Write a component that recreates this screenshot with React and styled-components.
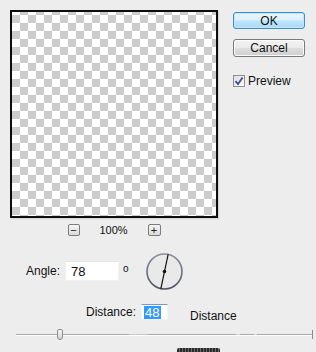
import styled, { createGlobalStyle } from "styled-components";

const Global = createGlobalStyle`
  html, body {
    margin: 0;
    padding: 0;
    background: #ededed;
  }
  body {
    font-family: "Liberation Sans", Arial, sans-serif;
    font-size: 12px;
    color: #111;
  }
`;

const Dialog = styled.div`
  width: 316px;
  height: 352px;
  background: #ededed;
  overflow: hidden;
  display: flex;
  flex-direction: column;
`;

const Top = styled.div`
  display: flex;
`;

const PreviewCol = styled.div`
  padding: 10px 0 0 10px;
  display: flex;
  flex-direction: column;
  align-items: center;
`;

const Preview = styled.div`
  width: 204px;
  height: 204px;
  border: 2px solid #0c0c0c;
  box-shadow: 1px 1px 0 #d6d6d6, 2px 2px 0 #e4e4e4;
  background: repeating-conic-gradient(#cdcdcd 0 25%, #ffffff 0 50%);
  background-size: 16px 16px;
  background-position: -8px 3px;
`;

const ZoomRow = styled.div`
  margin-top: 6px;
  display: flex;
  align-items: center;
`;

const ZoomButton = styled.div`
  width: ${(p) => p.$w}px;
  height: 12px;
  box-sizing: border-box;
  border: 1px solid #7b7b7b;
  border-radius: 2px;
  background: linear-gradient(#f6f6f6, #d9d9d9);
  display: flex;
  align-items: center;
  justify-content: center;
  font-size: 11px;
  line-height: 1;
  color: #222;
`;

const ZoomLabel = styled.div`
  width: 68px;
  text-align: center;
  font-size: 11px;
`;

const SideCol = styled.div`
  margin-left: 15px;
  padding-top: 12px;
  display: flex;
  flex-direction: column;
`;

const Button = styled.div`
  width: 72px;
  height: ${(p) => (p.$primary ? 17 : 18)}px;
  box-sizing: border-box;
  margin-top: ${(p) => p.$mt || 0}px;
  border: 1px solid ${(p) => (p.$primary ? "#3b8fc2" : "#7a7a7a")};
  border-radius: 3px;
  background: ${(p) =>
    p.$primary
      ? "linear-gradient(#eaf6fd 0%, #d9f0fc 48%, #bee6fd 52%, #a7d9f5 100%)"
      : "linear-gradient(#f2f2f2 0%, #ebebeb 48%, #dddddd 52%, #cfcfcf 100%)"};
  box-shadow: inset 0 0 0 1px ${(p) => (p.$primary ? "#c4e5f6" : "#fbfbfb")};
  display: flex;
  align-items: center;
  justify-content: center;
  font-size: 12px;
  color: #111;
`;

const CheckRow = styled.label`
  margin-top: 17px;
  display: flex;
  align-items: center;
  gap: 3px;
  font-size: 12px;
`;

const CheckBox = styled.span`
  width: 12px;
  height: 12px;
  box-sizing: border-box;
  border: 1px solid #8e8f8f;
  background: linear-gradient(135deg, #dcdcdc, #ffffff);
  display: flex;
  align-items: center;
  justify-content: center;
`;

const AngleRow = styled.div`
  margin-top: 17px;
  padding-left: 26px;
  display: flex;
  align-items: center;
  height: 36px;
`;

const Label = styled.span`
  font-size: 12px;
  margin-right: ${(p) => p.$mr || 0}px;
`;

const LowLabel = styled.span`
  font-size: 12px;
  margin-left: 22px;
  position: relative;
  top: 4px;
`;

const Field = styled.div`
  width: ${(p) => p.$w}px;
  height: ${(p) => p.$h}px;
  box-sizing: border-box;
  background: #fff;
  border: 1px solid #f2f2f2;
  border-top-color: ${(p) => (p.$focus ? "#6f9bd0" : "#e6e6e6")};
  display: flex;
  align-items: center;
  padding-left: ${(p) => p.$pl}px;
  font-size: 13px;
`;

const Selected = styled.span`
  background: #3399ff;
  color: #fff;
  padding: 0 1px;
  line-height: 13px;
`;

const Degree = styled.span`
  align-self: flex-start;
  margin: 10px 17px 0 4px;
  font-size: 10px;
`;

const DistanceRow = styled.div`
  margin-top: 14px;
  padding-left: 86px;
  display: flex;
  align-items: center;
  height: 18px;
`;

const Slider = styled.div`
  position: relative;
  margin: 8px 0 0 16px;
  width: 297px;
  height: 12px;
`;

const Track = styled.div`
  position: absolute;
  left: 0;
  right: 0;
  top: 5px;
  height: 1px;
  background: linear-gradient(
    90deg,
    #a8a8a8 0 38%,
    #c9c9c9 38% 44%,
    #a8a8a8 44% 74%,
    #d6d6d6 74% 75.5%,
    #a8a8a8 75.5% 80%,
    #d6d6d6 80% 81%,
    #a8a8a8 81% 100%
  );
  border-bottom: 1px solid #ffffff;
`;

const EndTick = styled.div`
  position: absolute;
  right: 0;
  top: 1px;
  width: 1px;
  height: 9px;
  background: #8a8a8a;
`;

const Thumb = styled.div`
  position: absolute;
  left: 41px;
  top: 0;
  width: 6px;
  height: 11px;
  box-sizing: border-box;
  border: 1px solid #8c8c8c;
  border-radius: 2px 2px 3px 3px;
  background: linear-gradient(#f4f4f4, #d4d4d4);
`;

const Strip = styled.div`
  margin: 7px 0 0 177px;
  width: 43px;
  height: 4px;
  background: repeating-linear-gradient(90deg, #2a2a2a 0 2px, #6a6a6a 2px 3px);
  border-radius: 2px 2px 0 0;
`;

const Dial = ({ angle }) => {
  const r = 17.5;
  const a = (angle * Math.PI) / 180;
  const dx = Math.cos(a) * r;
  const dy = Math.sin(a) * r;
  return (
    <svg width="37" height="37" viewBox="0 0 37 37">
      <defs>
        <linearGradient id="rim" x1="0" y1="0" x2="0" y2="1">
          <stop offset="0" stopColor="#8a90a0" />
          <stop offset="1" stopColor="#4e5566" />
        </linearGradient>
      </defs>
      <circle cx="18.5" cy="18.5" r="17.5" fill="#e9e9e9" stroke="url(#rim)" strokeWidth="1.6" />
      <line
        x1={18.5 + dx}
        y1={18.5 - dy}
        x2={18.5 - dx}
        y2={18.5 + dy}
        stroke="#111"
        strokeWidth="1.2"
      />
      <circle cx="18.5" cy="18.5" r="1.8" fill="#111" />
    </svg>
  );
};

export default function App() {
  return (
    <>
      <Global />
      <Dialog>
        <Top>
          <PreviewCol>
            <Preview />
            <ZoomRow>
              <ZoomButton $w={12}>−</ZoomButton>
              <ZoomLabel>100%</ZoomLabel>
              <ZoomButton $w={13}>+</ZoomButton>
            </ZoomRow>
          </PreviewCol>
          <SideCol>
            <Button $primary>OK</Button>
            <Button $mt={10}>Cancel</Button>
            <CheckRow>
              <CheckBox>
                <svg width="10" height="10" viewBox="0 0 10 10">
                  <path d="M1.5 5.2 L4 8 L8.6 1.4" fill="none" stroke="#3b4f8f" strokeWidth="1.8" />
                </svg>
              </CheckBox>
              Preview
            </CheckRow>
          </SideCol>
        </Top>
        <AngleRow>
          <Label $mr={5}>Angle:</Label>
          <Field $w={54} $h={20} $pl={5}>78</Field>
          <Degree>o</Degree>
          <Dial angle={78} />
        </AngleRow>
        <DistanceRow>
          <Label $mr={5}>Distance:</Label>
          <Field $w={27} $h={16} $pl={2} $focus>
            <Selected>48</Selected>
          </Field>
          <LowLabel>Distance</LowLabel>
        </DistanceRow>
        <Slider>
          <Track />
          <EndTick />
          <Thumb />
        </Slider>
        <Strip />
      </Dialog>
    </>
  );
}
